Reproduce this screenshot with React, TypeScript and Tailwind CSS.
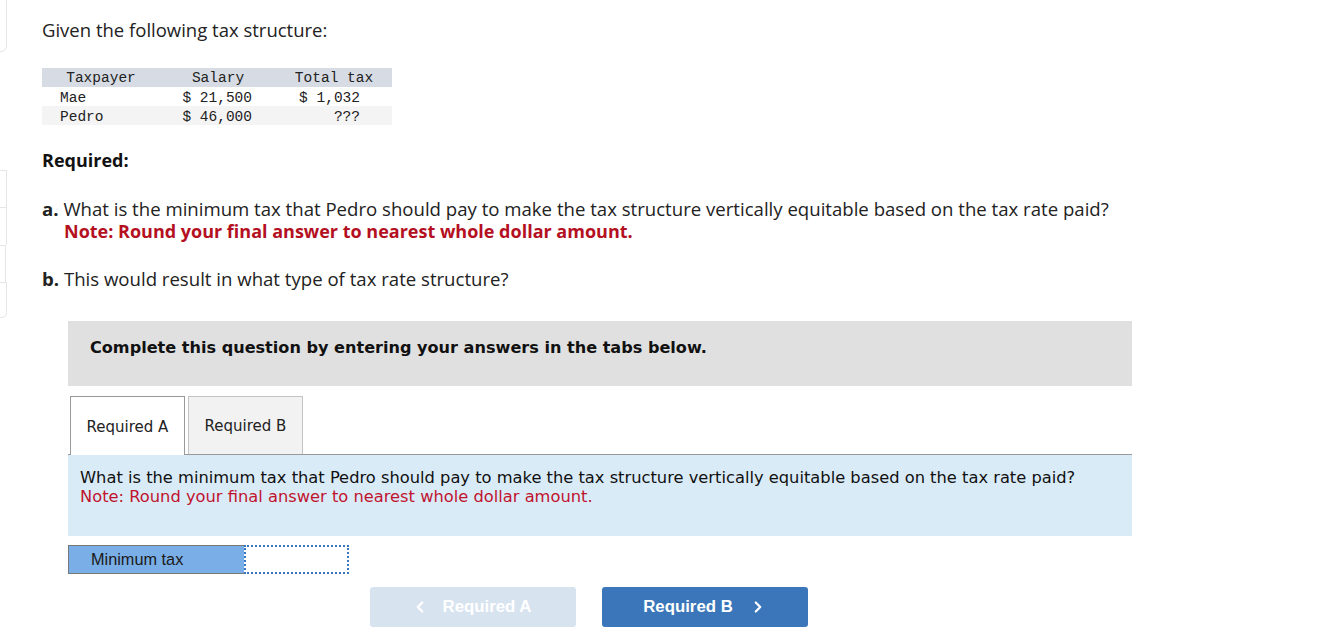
import { ChevronLeft, ChevronRight } from "lucide-react";

const rows = [
  { name: "Mae", salary: "$ 21,500", tax: "$ 1,032", shade: false },
  { name: "Pedro", salary: "$ 46,000", tax: "???", shade: true },
];

const sans = "font-['Open_Sans','Lato',sans-serif]";
const verdana = "font-['DejaVu_Sans',Verdana,sans-serif]";

export default function App() {
  return (
    <div className="relative min-h-[634px] w-[1321px] bg-white text-[#222]">
      {/* edge fragments of neighbouring panels */}
      <div className="absolute left-[-10px] top-[-10px] h-[62px] w-[17px] rounded-br-[6px] border border-[#e6e6e6]" />
      <div className="absolute left-[-10px] top-[170px] flex w-[17px] flex-col">
        <div className="h-[37px] border border-b-0 border-[#e6e6e6]" />
        <div className="h-[38px] border border-b-0 border-[#e6e6e6]" />
        <div className="mr-[1px] h-[37px] border border-b-0 border-[#e6e6e6]" />
        <div className="h-[36px] rounded-br-[5px] border border-[#e6e6e6]" />
      </div>

      <div className="pl-[42px] pt-[18px]">
        <p className={`${sans} text-[18.5px] leading-[24px] text-[#222]`}>
          Given the following tax structure:
        </p>

        <div className="mt-[26px] w-[350px] font-['Liberation_Mono',monospace] text-[14.5px] text-[#222]">
          <div className="grid h-[19px] grid-cols-[118px_116px_116px] items-center bg-[#d7dce4] pt-[1px] leading-[18px]">
            <div className="text-center">Taxpayer</div>
            <div className="text-center">Salary</div>
            <div className="text-center">Total tax</div>
          </div>
          {rows.map((r) => (
            <div
              key={r.name}
              className={`grid h-[19px] grid-cols-[118px_116px_116px] items-center pt-[3px] leading-[16px] ${
                r.shade ? "bg-[#f4f4f4]" : "bg-white"
              }`}
            >
              <div className="pl-[18px]">{r.name}</div>
              <div className="pr-[24px] text-right">{r.salary}</div>
              <div className="pr-[32px] text-right">{r.tax}</div>
            </div>
          ))}
        </div>

        <p className={`${sans} mt-[24px] text-[18px] font-bold leading-[22px] text-[#111]`}>
          Required:
        </p>

        <div className={`${sans} mt-[27px] text-[18.6px] leading-[22px]`}>
          <p>
            <span className="font-bold">a.</span> What is the minimum tax that Pedro should pay to
            make the tax structure vertically equitable based on the tax rate paid?
          </p>
          <p className="pl-[22px] text-[18px] font-bold text-[#b4101f]">
            Note: Round your final answer to nearest whole dollar amount.
          </p>
          <p className="mt-[26px]">
            <span className="font-bold">b.</span> This would result in what type of tax rate
            structure?
          </p>
        </div>
      </div>

      <div className="ml-[68px] mt-[31px] w-[1064px]">
        <div className="flex h-[65px] items-center bg-[#e0e0e0] pb-[10px] pl-[22px]">
          <p className={`${verdana} text-[16.1px] font-bold text-[#111]`}>
            Complete this question by entering your answers in the tabs below.
          </p>
        </div>

        <div className="mt-[10px] flex gap-[3px] border-b border-[#999] pl-[2px]">
          <div
            className={`${verdana} -mb-px flex h-[59px] w-[115px] items-center justify-center border border-b-0 border-[#999] bg-white pt-[2px] text-[15px]`}
          >
            Required A
          </div>
          <div
            className={`${verdana} flex h-[58px] w-[115px] items-center justify-center border border-b-0 border-[#c4c4c4] bg-[#f2f2f2] pt-[2px] text-[15px]`}
          >
            Required B
          </div>
        </div>

        <div className={`${verdana} h-[81px] bg-[#daebf8] pl-[12px] pt-[13px] text-[16.3px] leading-[19px]`}>
          <p className="text-[#111]">
            What is the minimum tax that Pedro should pay to make the tax structure vertically
            equitable based on the tax rate paid?
          </p>
          <p className="text-[#c0142e]">Note: Round your final answer to nearest whole dollar amount.</p>
        </div>

        <div className="mt-[9px] flex h-[29px]">
          <div className="flex w-[176px] items-center border border-r-0 border-[#777] bg-[#7aaee6] pl-[22px] font-['Liberation_Sans',Arial,sans-serif] text-[16.3px] text-[#1a1a1a]">
            Minimum tax
          </div>
          <div className="w-[105px] border-2 border-dotted border-[#3a76c0] bg-white" />
        </div>

        <div className="mt-[13px] flex gap-[26px] pl-[302px] font-['Liberation_Sans',Arial,sans-serif] text-[16.8px] font-bold text-white">
          <div className="flex h-[40px] w-[206px] items-center justify-center gap-[14px] rounded-[3px] bg-[#d8e3f0] pb-[1px] pr-[4px]">
            <ChevronLeft size={18} strokeWidth={3} />
            <span>Required A</span>
          </div>
          <div className="flex h-[40px] w-[206px] items-center justify-center gap-[16px] rounded-[3px] bg-[#3a76b9] pb-[1px]">
            <span>Required B</span>
            <ChevronRight size={18} strokeWidth={3} />
          </div>
        </div>
      </div>
    </div>
  );
}
